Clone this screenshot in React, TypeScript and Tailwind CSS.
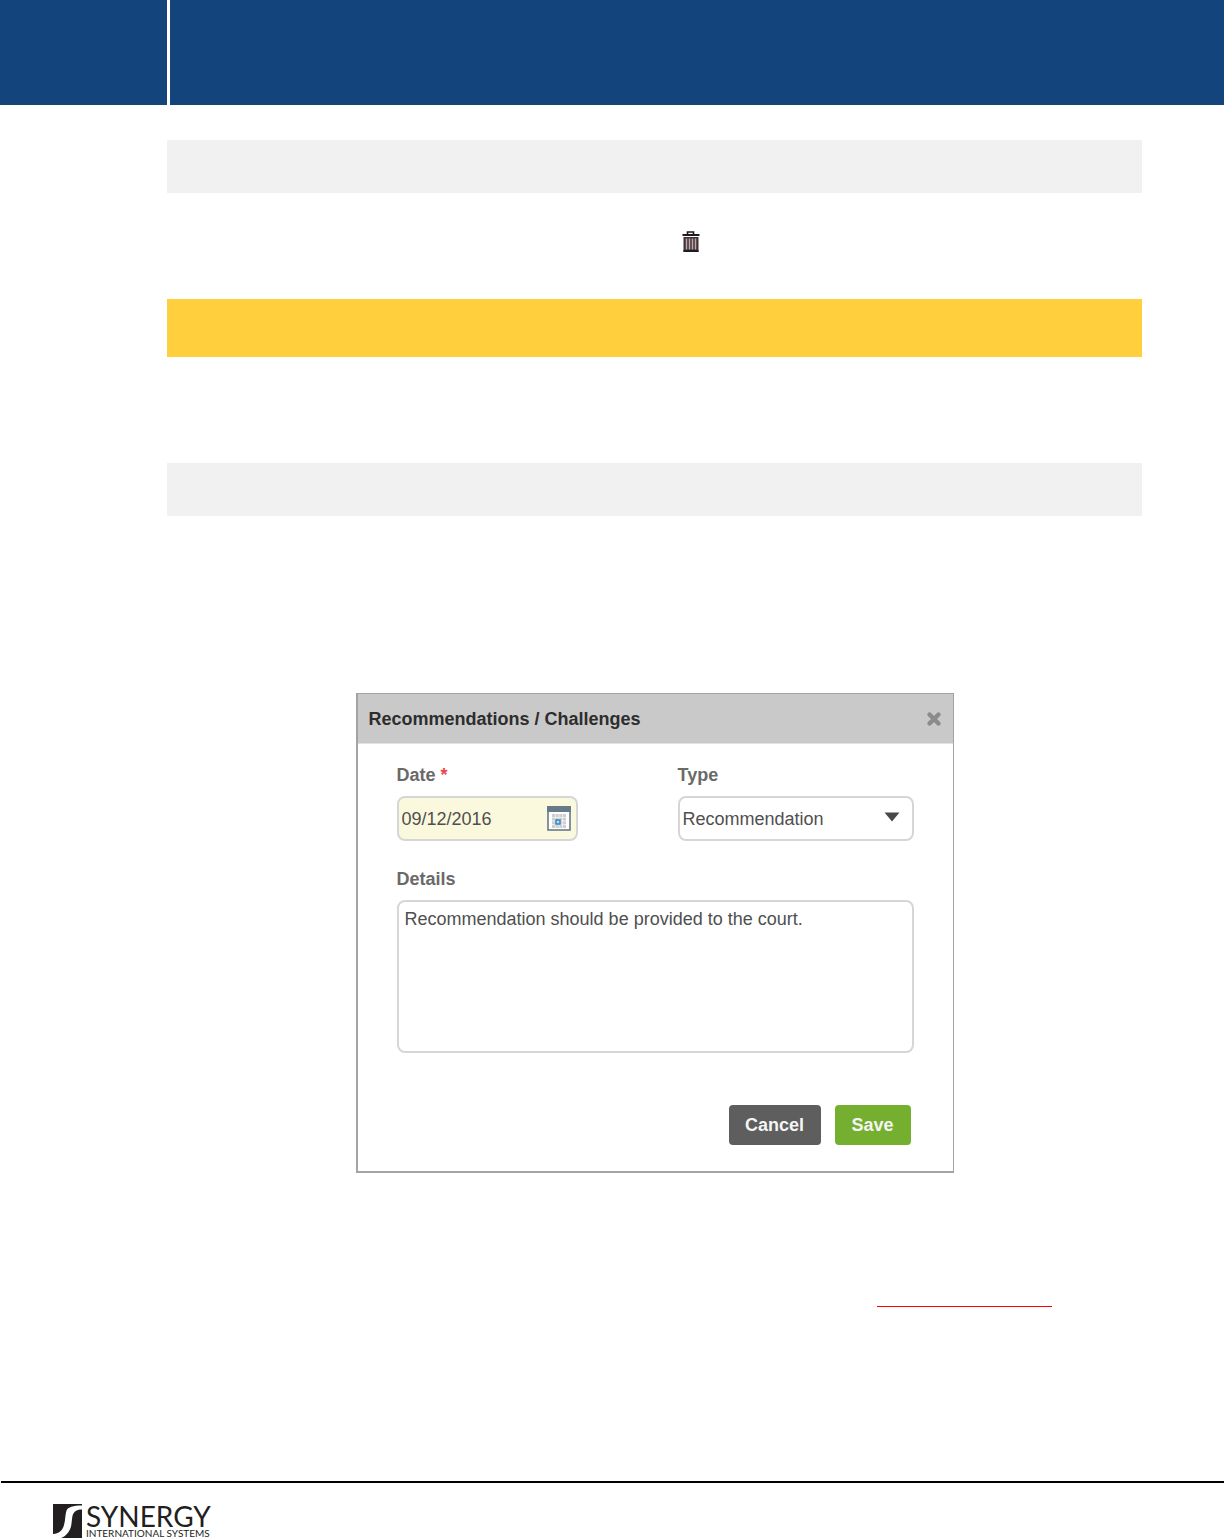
import { useState } from "react";

function TrashIcon() {
  return (
    <svg width="18" height="22" viewBox="0 0 18 22" aria-hidden="true">
      <path d="M5.500 3V1h6v2" fill="none" stroke="#1c1a20" strokeWidth="1.6" />
      <rect x="0.500" y="3" width="17" height="2" fill="#1c1a20" />
      <rect x="1.500" y="6" width="15" height="15" fill="#3f3338" />
      <path d="M4.500 7.500v11M7.500 7.500v11M10.500 7.500v11M13.500 7.500v11" stroke="#bfa8aa" strokeWidth="1.5" />
      <rect x="1.500" y="19" width="15" height="2" fill="#1a1c28" />
    </svg>
  );
}

function CalendarIcon() {
  return (
    <svg width="24" height="25" viewBox="0 0 24 25" aria-hidden="true">
      <rect x="1" y="1" width="22" height="23" fill="#fff" stroke="#677a8a" strokeWidth="1.6" />
      <rect x="0" y="0" width="24" height="6" fill="#677a8a" />
      <rect x="5" y="8" width="14" height="14" fill="#cfcfcf" />
      <path d="M8.500 8v14M12 8v14M15.500 8v14M5 11.500h14M5 15h14M5 18.500h14" stroke="#f1f1f1" strokeWidth="0.8" />
      <rect x="9" y="14" width="4" height="4" fill="#b9dcf2" stroke="#3d8cc4" strokeWidth="1.6" />
    </svg>
  );
}

function CloseIcon() {
  return (
    <svg width="16" height="16" viewBox="0 0 16 16" aria-hidden="true">
      <path d="M3.500 3.500l9 9M12.500 3.500l-9 9" stroke="#8b8b8b" strokeWidth="4.400" strokeLinecap="round" />
    </svg>
  );
}

function LogoMark() {
  return (
    <svg width="29" height="34" viewBox="0 0 29 34" className="shrink-0" aria-hidden="true">
      <rect width="29" height="34" fill="#231f20" />
      <path
        d="M29 1.500C20 1.500 15 3 13.500 6.500C12 11 12.500 16 11 21C9.500 27 6 29.500 0 30V34H8C13 32 16.500 28 18 22.500C19.500 16 18.500 11 21.500 8C23.500 5.800 26 5.500 29 5.500Z"
        fill="#fff"
      />
    </svg>
  );
}

function RecommendationDialog() {
  const [date, setDate] = useState("09/12/2016");
  const [type, setType] = useState("Recommendation");
  const [details, setDetails] = useState("Recommendation should be provided to the court.");

  return (
    <section
      role="dialog"
      aria-labelledby="dialog-title"
      className="mx-auto w-full max-w-[598px] border border-l-2 border-b-2 border-[#a3a3a3] bg-white text-lg leading-6 text-[#4f4f4f]"
    >
      <header className="flex h-[50px] items-center justify-between border-b border-[#e2e2e2] bg-[#c9c9c9] px-[11px]">
        <h2 id="dialog-title" className="font-bold text-[#2d2d2d]">Recommendations / Challenges</h2>
        <button type="button" aria-label="Close">
          <CloseIcon />
        </button>
      </header>

      <form className="px-[39px] pt-[19px] pb-[26px]" onSubmit={e => e.preventDefault()}>
        <div className="flex justify-between">
          <div className="w-[181px]">
            <label htmlFor="date" className="block font-bold text-[#696969]">
              Date <span className="text-[#e8474f]">*</span>
            </label>
            <div className="mt-[9px] flex h-[45px] items-center rounded-lg border-2 border-[#d6d6d6] bg-[#fbf9dd] pr-[5px] pl-[3px]">
              <input
                id="date"
                type="text"
                value={date}
                onChange={e => setDate(e.target.value)}
                className="min-w-0 flex-1 bg-transparent outline-none"
              />
              <button type="button" aria-label="Pick a date">
                <CalendarIcon />
              </button>
            </div>
          </div>

          <div className="w-[236px]">
            <label htmlFor="type" className="block font-bold text-[#696969]">Type</label>
            <div className="relative mt-[9px]">
              <select
                id="type"
                value={type}
                onChange={e => setType(e.target.value)}
                className="h-[45px] w-full appearance-none rounded-lg border-2 border-[#d6d6d6] bg-white pl-[3px] outline-none"
              >
                <option>Recommendation</option>
                <option>Challenge</option>
              </select>
              <svg width="16" height="10" viewBox="0 0 16 10" className="pointer-events-none absolute top-4 right-3.5" aria-hidden="true">
                <path d="M.500 .500h15L8 9.500z" fill="#484848" />
              </svg>
            </div>
          </div>
        </div>

        <label htmlFor="details" className="mt-[26px] block font-bold text-[#696969]">Details</label>
        <textarea
          id="details"
          value={details}
          onChange={e => setDetails(e.target.value)}
          className="mt-[9px] block h-[153px] w-full resize-none rounded-lg border-2 border-[#d6d6d6] px-1.5 py-[5px] outline-none"
        />

        <div className="mt-[52px] flex justify-end gap-3.5 pr-[3px] font-bold text-[#f4f4f4]">
          <button type="button" className="h-10 w-[92px] rounded bg-[#5e5e5e]">Cancel</button>
          <button type="submit" className="h-10 w-[76px] rounded bg-[#74af2f]">Save</button>
        </div>
      </form>
    </section>
  );
}

export default function App() {
  return (
    <div className="flex min-h-screen flex-col bg-white font-['Liberation_Sans',sans-serif]">
      <header className="flex h-[105px] bg-[#14447c]">
        <div className="w-[170px] border-r-3 border-white" />
      </header>

      <main className="pt-[35px] pr-[82px] pl-[167px]">
        <div className="h-[53px] bg-[#f1f1f1]" />
        <div className="flex h-[106px] items-start pt-[38px] pl-[515px]">
          <TrashIcon />
        </div>
        <div className="h-[58px] bg-[#ffcf3d]" />
        <div className="mt-[106px] mb-[177px] h-[53px] bg-[#f1f1f1]" />
        <RecommendationDialog />
        <div className="mt-[133px] flex justify-end pr-[90px]">
          <div className="w-[175px] border-t border-[#ff0000]" />
        </div>
      </main>

      <footer className="mt-auto ml-px flex h-[57px] border-t-2 border-black pt-[21px] pl-[52px]">
        <LogoMark />
        <div className="ml-1 font-['Lato',sans-serif] whitespace-nowrap text-[#231f20]">
          <div className="text-[28px] leading-6">SYNERGY</div>
          <div className="text-[10px] leading-[10px]">INTERNATIONAL SYSTEMS</div>
        </div>
      </footer>
    </div>
  );
}
